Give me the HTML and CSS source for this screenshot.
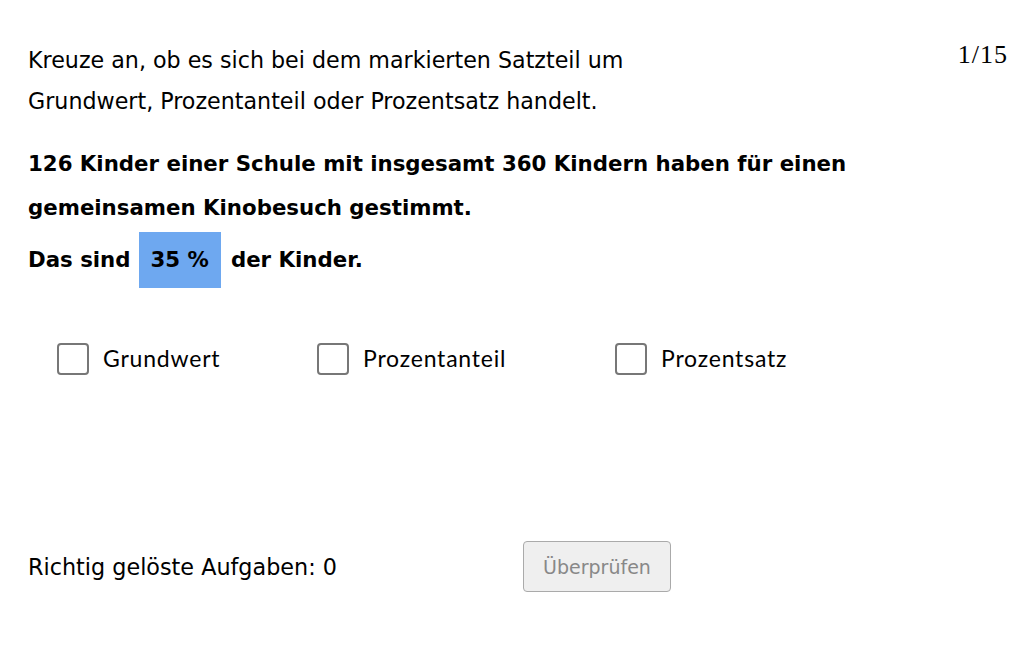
FILE: index.html
```html
<!DOCTYPE html>
<html lang="de">
<head>
<meta charset="utf-8">
<link rel="stylesheet" href="styles.css">
</head>
<body>
<div class="page">
  <div class="top">
    <p class="intro">Kreuze an, ob es sich bei dem markierten Satzteil um<br>Grundwert, Prozentanteil oder Prozentsatz handelt.</p>
    <div class="counter">1/15</div>
  </div>
  <p class="task">126 Kinder einer Schule mit insgesamt 360 Kindern haben für einen<br>gemeinsamen Kinobesuch gestimmt.</p>
  <p class="task line3">Das sind <span class="mark">35 %</span> der Kinder.</p>
  <div class="options">
    <label class="opt o1"><span class="box"></span><span class="lbl">Grundwert</span></label>
    <label class="opt o2"><span class="box"></span><span class="lbl">Prozentanteil</span></label>
    <label class="opt o3"><span class="box"></span><span class="lbl">Prozentsatz</span></label>
  </div>
  <div class="footer">
    <div class="score">Richtig gelöste Aufgaben: 0</div>
    <button class="check" disabled>Überprüfen</button>
  </div>
</div>
</body>
</html>
```
FILE: styles.css
```css
html, body { margin: 0; padding: 0; background: #fff; }
body { font-family: "DejaVu Sans", sans-serif; color: #000; }
.page { width: 1032px; height: 645px; box-sizing: border-box; padding: 40px 24px 0 28px; }
.top { display: flex; justify-content: space-between; align-items: flex-start; }
.intro { margin: 0; font-size: 22.2px; line-height: 41px; }
.counter { font-family: "Liberation Serif", serif; font-size: 26px; line-height: 30px; letter-spacing: 1px; }
.task { margin: 0; font-weight: bold; font-size: 21.3px; line-height: 44px; }
.top + .task { margin-top: 20px; }
.line3 { display: flex; align-items: center; height: 56px; line-height: 56px; margin-top: 2px; }
.mark { display: inline-block; background: #6ea8f0; padding: 0 12px; margin: 0 10px 0 8px; height: 56px; line-height: 56px; }
.options { display: flex; align-items: center; margin-top: 55px; padding-left: 29px; }
.opt { display: flex; align-items: center; font-family: Lato, sans-serif; font-size: 23px; letter-spacing: 0.8px; }
.lbl { position: relative; top: -1px; }
.box { width: 28px; height: 28px; border: 2px solid #777; border-radius: 4px; margin-right: 14px; box-sizing: content-box; }
.o1 { width: 260px; }
.o2 { width: 298px; }
.footer { display: flex; align-items: center; margin-top: 166px; }
.score { font-size: 22.3px; width: 495px; }
.check { font-family: "DejaVu Sans", sans-serif; font-size: 19px; color: #888; background: #efefef; border: 1px solid #aaa; border-radius: 4px; width: 148px; height: 51px; padding: 0; }
```
